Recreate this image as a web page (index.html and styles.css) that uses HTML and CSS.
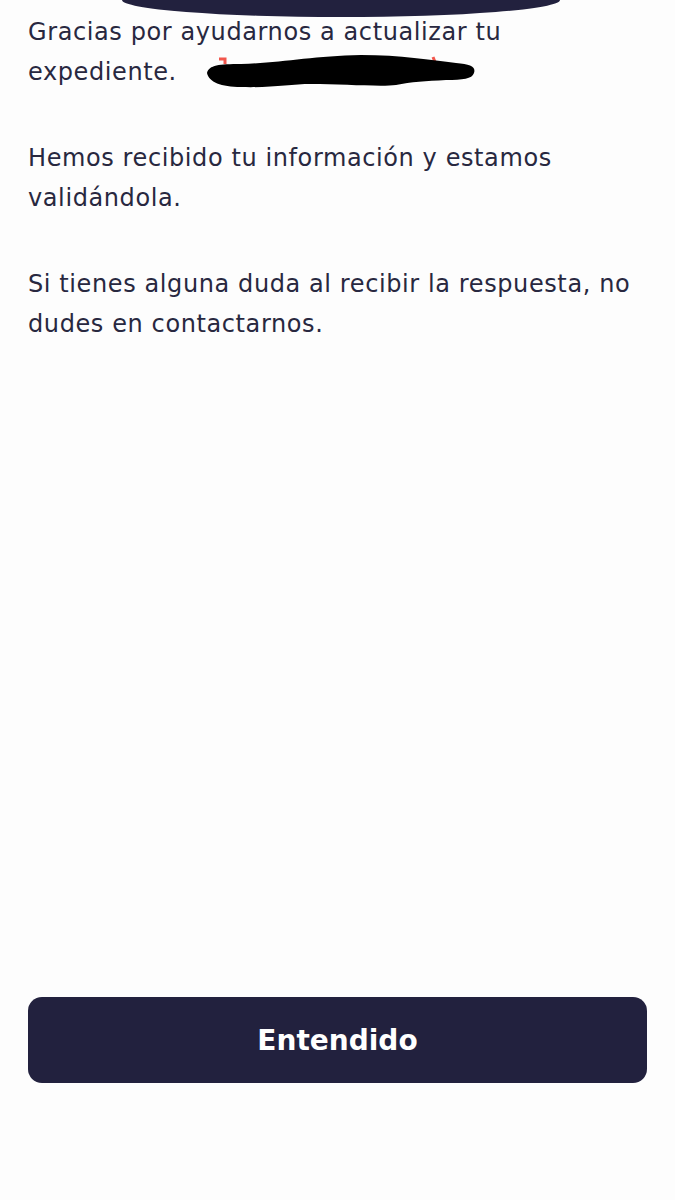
FILE: index.html
```html
<!DOCTYPE html>
<html lang="es">
<head>
<meta charset="utf-8">
<title>Gracias</title>
<link rel="stylesheet" href="styles.css">
</head>
<body>
<div class="screen">
  <div class="arc"></div>
  <main class="content">
    <p class="msg">Gracias por ayudarnos a actualizar tu expediente. <span class="redact"><svg viewBox="0 0 280 40" width="280" height="40" aria-hidden="true"><path d="M18 8 L24 8 L24 13" fill="none" stroke="#f2564c" stroke-width="3"/><path d="M232 6 l2 5" stroke="#f2564c" stroke-width="3"/><path d="M6 22 C8 14 18 13 40 13 C80 12 110 5 160 4 C200 4 230 9 255 12 C270 13 275 16 273 22 C271 28 262 29 245 29 C225 30 210 31 195 34 C180 36 140 33 110 33 C90 33 70 37 40 36 C20 36 8 31 6 22 Z" fill="#000"/></svg></span></p>
    <p class="msg">Hemos recibido tu información y estamos validándola.</p>
    <p class="msg">Si tienes alguna duda al recibir la respuesta, no dudes en contactarnos.</p>
  </main>
  <div class="actions">
    <button class="btn" type="button">Entendido</button>
  </div>
</div>
</body>
</html>
```
FILE: styles.css
```css
html, body {
  margin: 0;
  padding: 0;
  background: #fdfdfd;
}
.screen {
  position: relative;
  min-height: 1200px;
  display: flex;
  flex-direction: column;
  font-family: "DejaVu Sans", "Noto Sans", sans-serif;
  color: #282840;
}
.arc {
  position: absolute;
  top: 0;
  left: 122px;
  width: 438px;
  height: 17px;
  background: #22213e;
  border-radius: 0 0 50% 50% / 0 0 100% 100%;
}
.content {
  padding: 12px 28px 0;
  flex: 1;
}
.msg {
  margin: 0 0 46px;
  font-size: 24px;
  line-height: 40px;
  letter-spacing: 0.6px;
}
.redact {
  display: inline-block;
  vertical-align: middle;
  margin-left: 16px;
  margin-top: -4px;
  height: 40px;
}
.redact svg {
  display: block;
}
.actions {
  padding: 0 28px 117px;
}
.btn {
  display: block;
  width: 100%;
  height: 86px;
  border: 0;
  border-radius: 14px;
  background: #22213e;
  color: #ffffff;
  font-family: "DejaVu Sans", "Noto Sans", sans-serif;
  font-weight: 700;
  font-size: 28px;
}
```
